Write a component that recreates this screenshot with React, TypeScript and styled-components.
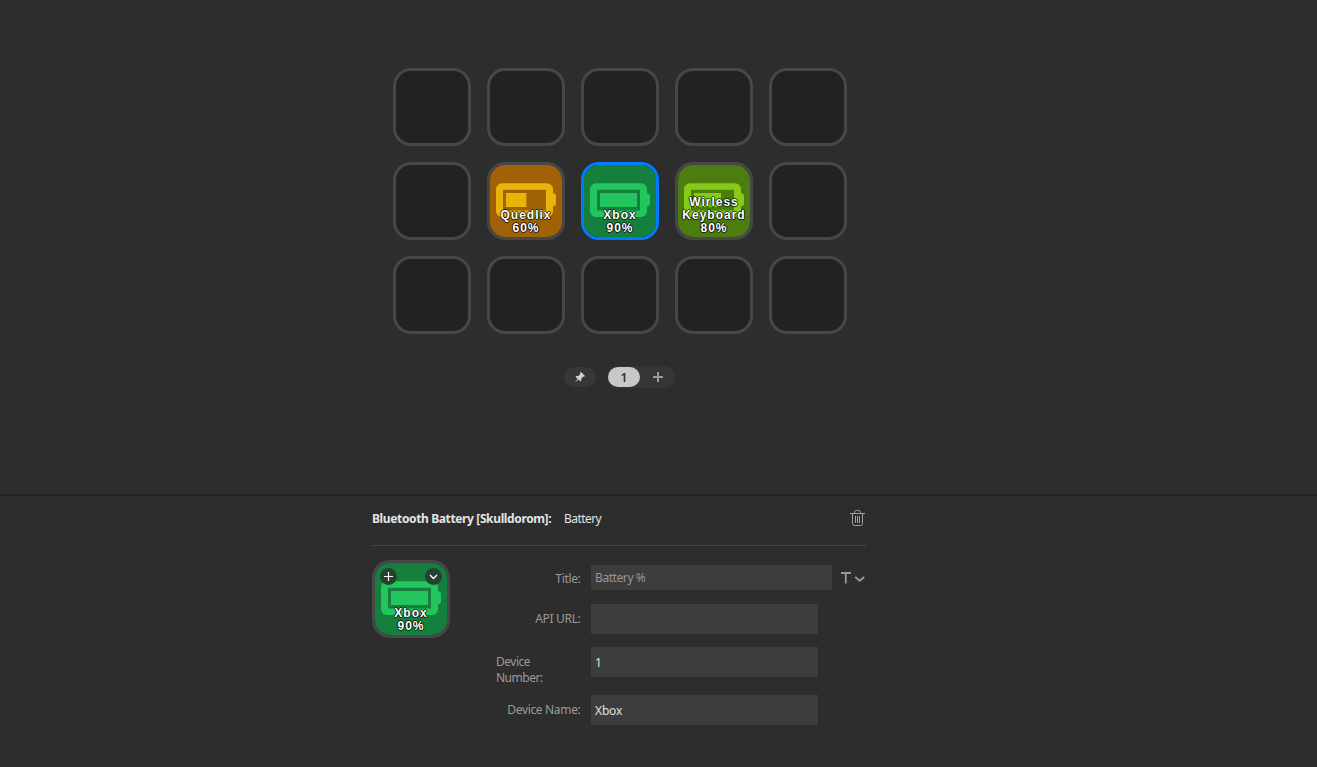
import React from 'react';
import styled, { createGlobalStyle, css } from 'styled-components';

const GlobalStyle = createGlobalStyle`
  * { box-sizing: border-box; }
  html, body, #root { height: 100%; }
  body {
    margin: 0;
    background: #2d2d2d;
    overflow: hidden;
    font-family: "Noto Sans", "Open Sans", sans-serif;
    font-size: 12px;
    color: #9b9b9b;
  }
`;

const Window = styled.div`
  display: flex;
  flex-direction: column;
  height: 100%;
`;

const Canvas = styled.section`
  display: flex;
  flex-direction: column;
  align-items: flex-start;
  height: 496px;
  flex: none;
  padding: 68px 0 0 393px;
  border-bottom: 2px solid #232323;
`;

const KeyGrid = styled.div`
  display: grid;
  grid-template-columns: repeat(5, 78px);
  grid-auto-rows: 78px;
  gap: 16px;
`;

const KeyFrame = styled.div<{ $selected?: boolean }>`
  position: relative;
  width: 78px;
  height: 78px;
  flex: none;
  border: 3px solid ${p => (p.$selected ? '#007bff' : '#474747')};
  border-radius: 18px;
  background: #222222;
  overflow: hidden;
`;

const Art = styled.svg`
  display: block;
  width: 72px;
  height: 72px;
`;

const KeyTitle = styled.div`
  position: absolute;
  left: -4px;
  right: -4px;
  bottom: 2px;
  text-align: center;
  white-space: pre;
  font: bold 12px/13px "Liberation Sans", Arial, sans-serif;
  letter-spacing: 1px;
  color: #fff;
  text-shadow:
    1px 0 0 rgba(0, 0, 0, 0.6), -1px 0 0 rgba(0, 0, 0, 0.6),
    0 1px 0 rgba(0, 0, 0, 0.6), 0 -1px 0 rgba(0, 0, 0, 0.6),
    0 0 2px rgba(0, 0, 0, 0.8);
`;

const Badge = styled.span<{ $side: 'left' | 'right' }>`
  position: absolute;
  top: 5px;
  ${p => p.$side}: 5px;
  display: flex;
  width: 17px;
  height: 17px;
  border-radius: 50%;
  background: #24432f;
`;

const Pager = styled.div`
  display: flex;
  align-items: center;
  gap: 11px;
  margin: 32px 0 0 171px;
`;

const PinButton = styled.div`
  display: flex;
  width: 32px;
  height: 20px;
  border-radius: 10px;
  background: #373737;
`;

const Pages = styled.div`
  display: flex;
  align-items: center;
  width: 68px;
  height: 22px;
  padding-left: 1px;
  border-radius: 11px;
  background: #353535;
`;

const PageNumber = styled.div`
  width: 32px;
  height: 20px;
  border-radius: 10px;
  background: #c8c8c8;
  color: #2d2d2d;
  font-weight: 600;
  line-height: 21px;
  text-align: center;
`;

const Inspector = styled.section`
  width: 494px;
  margin-left: 372px;
`;

const Header = styled.header`
  display: flex;
  height: 50px;
  padding: 0 1px 5px 0;
  align-items: center;
  border-bottom: 1px solid #474747;
  color: #e4e4e4;
`;

const ActionName = styled.strong`
  width: 192px;
  white-space: nowrap;
  letter-spacing: -0.37px;
`;

const ActionKind = styled.span`
  flex: 1;
  letter-spacing: -0.55px;
`;

const Body = styled.div`
  display: flex;
  padding-top: 14px;
`;

const Form = styled.div`
  width: 417px;
  flex: none;
  padding: 5px 0 0 46px;
`;

const Row = styled.div<{ $height: number; $gap: number }>`
  display: flex;
  height: ${p => p.$height}px;
  margin-bottom: ${p => p.$gap}px;
`;

const Label = styled.label<{ $wrap?: boolean; $top: number }>`
  width: 85px;
  flex: none;
  padding-top: ${p => p.$top}px;
  padding-right: 0.5px;
  margin-right: 10px;
  line-height: 16px;
  letter-spacing: -0.33px;
  text-align: right;
  ${p => p.$wrap && css`
    text-align: left;
    padding-right: 30px;
    letter-spacing: -0.5px;
  `}
`;

const Input = styled.input<{ $wide?: boolean }>`
  width: ${p => (p.$wide ? 241 : 227)}px;
  flex: none;
  height: 100%;
  padding: ${p => (p.$wide ? 0 : 1)}px 4px 0;
  border: 0;
  outline: 0;
  border-radius: 0;
  background: #3d3d3d;
  color: #e0e0e0;
  font: inherit;
  letter-spacing: ${p => (p.$wide ? -0.42 : -0.15)}px;
  &::placeholder { color: #969696; opacity: 1; }
`;

const FontMenu = styled.svg`
  margin: 4px 0 0 8px;
  flex: none;
`;

type Palette = { back: string; body: string };
const amber: Palette = { back: '#a16207', body: '#eab308' };
const green: Palette = { back: '#15803d', body: '#22c55e' };
const lime: Palette = { back: '#4d7c0f', body: '#84cc16' };

type Device = { palette: Palette; level: number; title: string };
const quedlix: Device = { palette: amber, level: 20.3, title: 'Quedlix\n60%' };
const xbox: Device = { palette: green, level: 37, title: 'Xbox\n90%' };
const keyboard: Device = { palette: lime, level: 27, title: 'Wirless\nKeyboard\n80%' };

function Key({ device, selected, children }: { device?: Device; selected?: boolean; children?: React.ReactNode }) {
  return (
    <KeyFrame $selected={selected}>
      {device && (
        <>
          <Art viewBox="0 0 72 72">
            <rect width="72" height="72" fill={device.palette.back} />
            <rect x="6" y="18.3" width="57" height="33.7" rx="6" fill={device.palette.body} />
            <path d="M62 28.3h1.5a2.6 2.6 0 0 1 2.5 2.5v8a2.6 2.6 0 0 1-2.5 2.5H62z" fill={device.palette.body} />
            <rect x="13" y="24.8" width="43" height="20.7" fill={device.palette.back} />
            <rect x="16" y="28" width={device.level} height="14" fill={device.palette.body} />
          </Art>
          <KeyTitle>{device.title}</KeyTitle>
        </>
      )}
      {children}
    </KeyFrame>
  );
}

const keys: (Device | undefined)[] = Array.from({ length: 15 });
keys[6] = quedlix;
keys[7] = xbox;
keys[8] = keyboard;

export default function App() {
  return (
    <Window>
      <GlobalStyle />
      <Canvas>
        <KeyGrid>
          {keys.map((device, i) => <Key key={i} device={device} selected={i === 7} />)}
        </KeyGrid>
        <Pager>
          <PinButton>
            <svg width="32" height="20" viewBox="0 0 32 20">
              <path d="M16.8 4.8 21 9l-1 .8-.7-.2-2.1 2.1.1 2-.8.8-2-2L11 15.4l2.6-3.6-2.1-2.1.8-.8 2 .1 2.1-2.1-.3-1.2z" fill="#d0d0d0" />
            </svg>
          </PinButton>
          <Pages>
            <PageNumber>1</PageNumber>
            <svg width="35" height="22" viewBox="0 0 35 22">
              <path d="M18 6v10M13 11h10" stroke="#999" strokeWidth="2" />
            </svg>
          </Pages>
        </Pager>
      </Canvas>
      <Inspector>
        <Header>
          <ActionName>Bluetooth Battery [Skulldorom]:</ActionName>
          <ActionKind>Battery</ActionKind>
          <svg width="15" height="18" viewBox="0 0 15 18" fill="none" stroke="#a0a0a0">
            <path d="M0 4.5h15M2.5 4.5v10a2 2 0 0 0 2 2h6a2 2 0 0 0 2-2v-10M4.5 4V3.2a2 2 0 0 1 2-1.7h2a2 2 0 0 1 2 1.7V4M5.5 7v7M7.5 7v7M9.5 7v7" />
          </svg>
        </Header>
        <Body>
          <Key device={xbox}>
            <Badge $side="left">
              <svg width="17" height="17" viewBox="0 0 17 17"><path d="M8.5 4v9M4 8.5h9" stroke="#fff" strokeWidth="1.2" /></svg>
            </Badge>
            <Badge $side="right">
              <svg width="17" height="17" viewBox="0 0 17 17"><path d="m5 7 3.5 3.5L12 7" fill="none" stroke="#fff" strokeWidth="1.4" /></svg>
            </Badge>
          </Key>
          <Form>
            <Row $height={25} $gap={14}>
              <Label $top={6}>Title:</Label>
              <Input $wide placeholder="Battery %" />
              <FontMenu width="27" height="18" viewBox="0 0 27 18" fill="none" stroke="#989898">
                <path d="M1 4h10M5.8 4v10.5" strokeWidth="1.8" />
                <path d="m15.2 8 4.5 3.8L24.2 8" strokeWidth="1.8" />
              </FontMenu>
            </Row>
            <Row $height={30} $gap={13}>
              <Label $top={7}>API URL:</Label>
              <Input />
            </Row>
            <Row $height={30} $gap={18}>
              <Label $wrap $top={7}>Device Number:</Label>
              <Input defaultValue="1" />
            </Row>
            <Row $height={30} $gap={0}>
              <Label $top={7}>Device Name:</Label>
              <Input defaultValue="Xbox" />
            </Row>
          </Form>
        </Body>
      </Inspector>
    </Window>
  );
}
